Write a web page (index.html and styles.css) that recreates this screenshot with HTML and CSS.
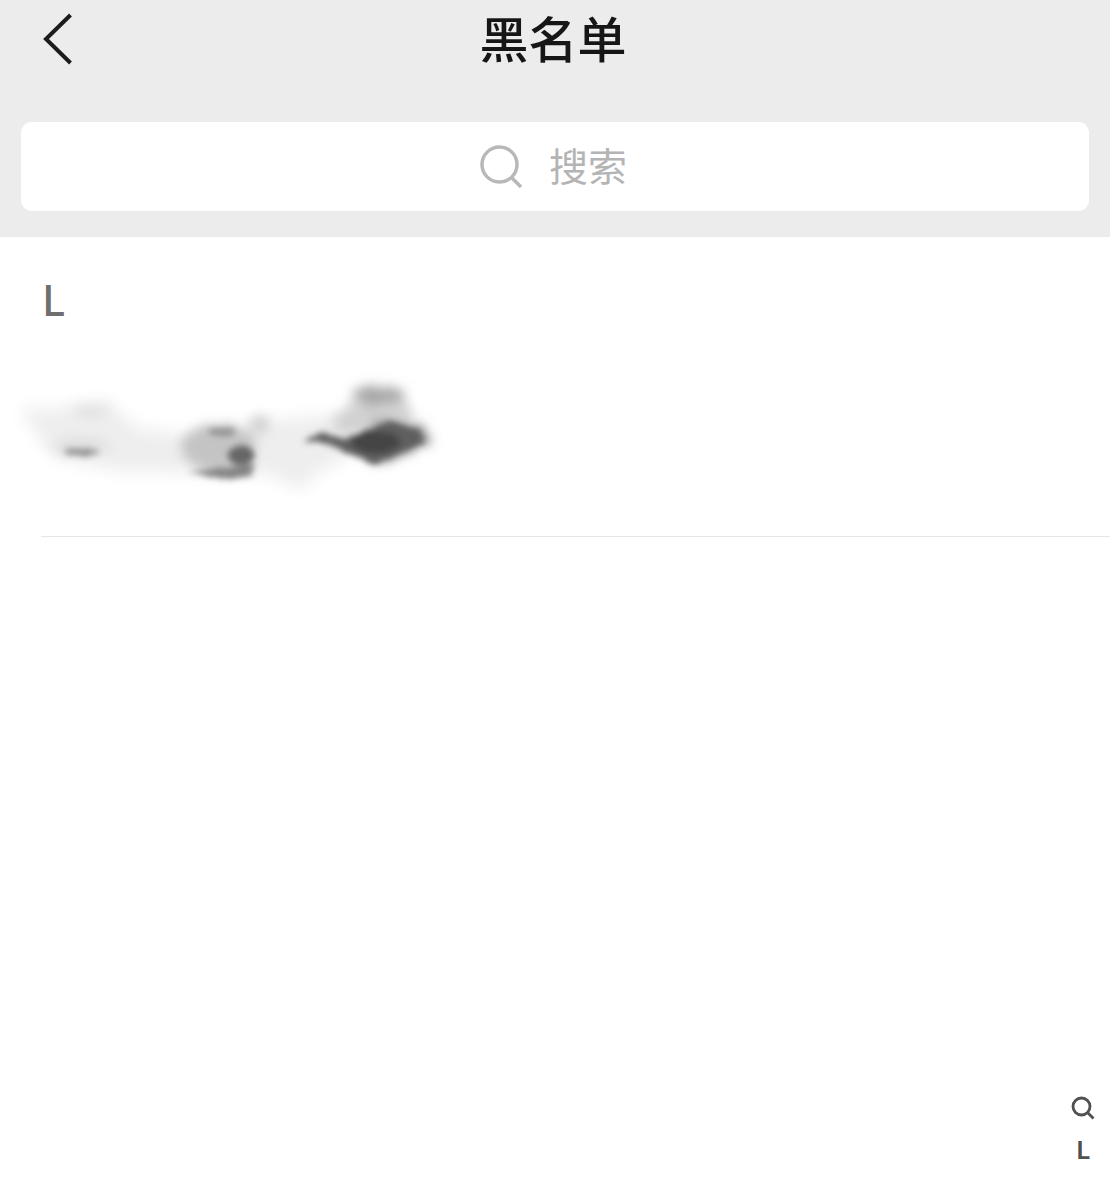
FILE: index.html
```html
<!DOCTYPE html>
<html lang="zh-CN">
<head>
<meta charset="utf-8">
<title>黑名单</title>
<link rel="stylesheet" href="styles.css">
</head>
<body>
<div class="page">
  <header class="top">
    <div class="nav">
      <svg class="back" viewBox="0 0 30 52" aria-hidden="true"><path d="M27.5 2 L3 26 L27.5 50"/></svg>
      <h1 class="title">黑名单</h1>
    </div>
    <div class="search">
      <svg class="search-icon" viewBox="0 0 44 44" aria-hidden="true"><circle cx="19.5" cy="19.5" r="17.5"/><path d="M31 32 L41 42"/></svg>
      <span class="search-text">搜索</span>
    </div>
  </header>
  <main class="list">
    <div class="letter">L</div>
    <div class="row">
      <svg class="smudge" viewBox="0 0 450 140" aria-hidden="true">
        <defs>
          <filter id="soft" x="-30%" y="-60%" width="160%" height="220%">
            <feTurbulence type="fractalNoise" baseFrequency="0.09" numOctaves="3" seed="4" result="n"/>
            <feDisplacementMap in="SourceGraphic" in2="n" scale="16" xChannelSelector="R" yChannelSelector="G"/>
            <feGaussianBlur stdDeviation="8"/>
          </filter>
          <filter id="mid" x="-30%" y="-60%" width="160%" height="220%">
            <feTurbulence type="fractalNoise" baseFrequency="0.12" numOctaves="3" seed="9" result="n"/>
            <feDisplacementMap in="SourceGraphic" in2="n" scale="12" xChannelSelector="R" yChannelSelector="G"/>
            <feGaussianBlur stdDeviation="6"/>
          </filter>
          <filter id="hard" x="-30%" y="-60%" width="160%" height="220%">
            <feTurbulence type="fractalNoise" baseFrequency="0.2" numOctaves="3" seed="2" result="n"/>
            <feDisplacementMap in="SourceGraphic" in2="n" scale="5" xChannelSelector="R" yChannelSelector="G"/>
            <feGaussianBlur stdDeviation="3"/>
          </filter>
        </defs>
        <g filter="url(#soft)">
          <path d="M22 40 L110 30 L135 58 L200 68 L260 50 L335 45 L350 85 L300 118 L255 100 L170 104 L110 100 L50 86 Z" fill="#eeeeee"/>
        </g>
        <g filter="url(#mid)">
          <ellipse cx="92" cy="41" rx="18" ry="6" fill="#e2e2e2"/>
          <ellipse cx="82" cy="76" rx="32" ry="9" fill="#e0e0e0"/>
          <ellipse cx="218" cy="78" rx="38" ry="24" fill="#c4c4c4"/>
          <ellipse cx="260" cy="54" rx="10" ry="9" fill="#d0d0d0"/>
          <path d="M330 56 Q350 24 392 14 L408 34 L414 52 L380 62 L340 66 Z" fill="#d2d2d2"/>
          <ellipse cx="378" cy="25" rx="26" ry="9" fill="#a4a4a4"/>
          <path d="M375 50 L425 58 L428 72 L395 88 L370 92 Z" fill="#707070"/>
        </g>
        <g filter="url(#hard)">
          <ellipse cx="81" cy="82" rx="17" ry="3.5" fill="#8a8a8a"/>
          <ellipse cx="222" cy="62" rx="15" ry="3.5" fill="#8f8f8f"/>
          <path d="M188 102 L225 97 L254 94 L252 106 L226 109 Z" fill="#838383"/>
          <ellipse cx="241" cy="85" rx="13" ry="10" fill="#666666"/>
          <path d="M304 71 L320 63 L346 68 L390 52 L418 60 L424 72 L395 84 L374 94 L345 82 L330 74 Z" fill="#5e5e5e"/>
          <ellipse cx="376" cy="72" rx="24" ry="11" fill="#454545"/>
        </g>
      </svg>
    </div>
  </main>
  <nav class="index">
    <svg class="index-icon" viewBox="0 0 24 24" aria-hidden="true"><circle cx="10.5" cy="10.5" r="8.5"/><path d="M17 17 L22.5 22.5"/></svg>
    <span class="index-letter">L</span>
  </nav>
</div>
</body>
</html>
```

FILE: styles.css
```css
* { box-sizing: border-box; }
html, body { margin: 0; padding: 0; background: #fff; }
body { font-family: "Noto Sans CJK SC", "Noto Sans", sans-serif; }
.page { position: relative; width: 1110px; height: 1200px; background: #fff; overflow: hidden; }

.top { height: 237px; background: #ececec; padding: 0 21px; }
.nav { position: relative; height: 122px; display: flex; justify-content: center; padding: 6px 4px 0 0; }
.back { position: absolute; left: 22px; top: 13px; width: 30px; height: 52px; fill: none; stroke: #1c1c1c; stroke-width: 4; }
.title { margin: 0; font-size: 49px; line-height: 62px; font-weight: 500; color: #161616; }

.search { height: 89px; background: #fff; border-radius: 11px; display: flex; align-items: center; justify-content: center; gap: 25px; padding: 0 3px 0 0; }
.search-icon { width: 44px; height: 44px; fill: none; stroke: #b8b8b8; stroke-width: 3.5; }
.search-text { font-size: 39px; line-height: 50px; color: #b4b4b4; position: relative; top: -3px; }

.list { padding-left: 41px; }
.letter { height: 103px; padding: 35px 0 0 1px; font-family: "Noto Sans", sans-serif; font-size: 43px; line-height: 56px; font-weight: 500; color: #6f6f6f; }
.row { height: 197px; margin-left: -41px; position: relative; display: flex; align-items: flex-start; }
.row::after { content: ""; position: absolute; left: 41px; right: 0; bottom: 0; height: 1px; background: #e6e6e6; }
.smudge { display: block; width: 450px; height: 140px; margin-top: 30px; }

.index { position: absolute; right: 15px; top: 1096px; width: 24px; display: flex; flex-direction: column; align-items: center; gap: 14px; }
.index-icon { width: 24px; height: 24px; fill: none; stroke: #505050; stroke-width: 2.8; }
.index-letter { font-family: "Noto Sans", sans-serif; font-size: 26px; line-height: 30px; font-weight: 600; color: #505050; }
```
